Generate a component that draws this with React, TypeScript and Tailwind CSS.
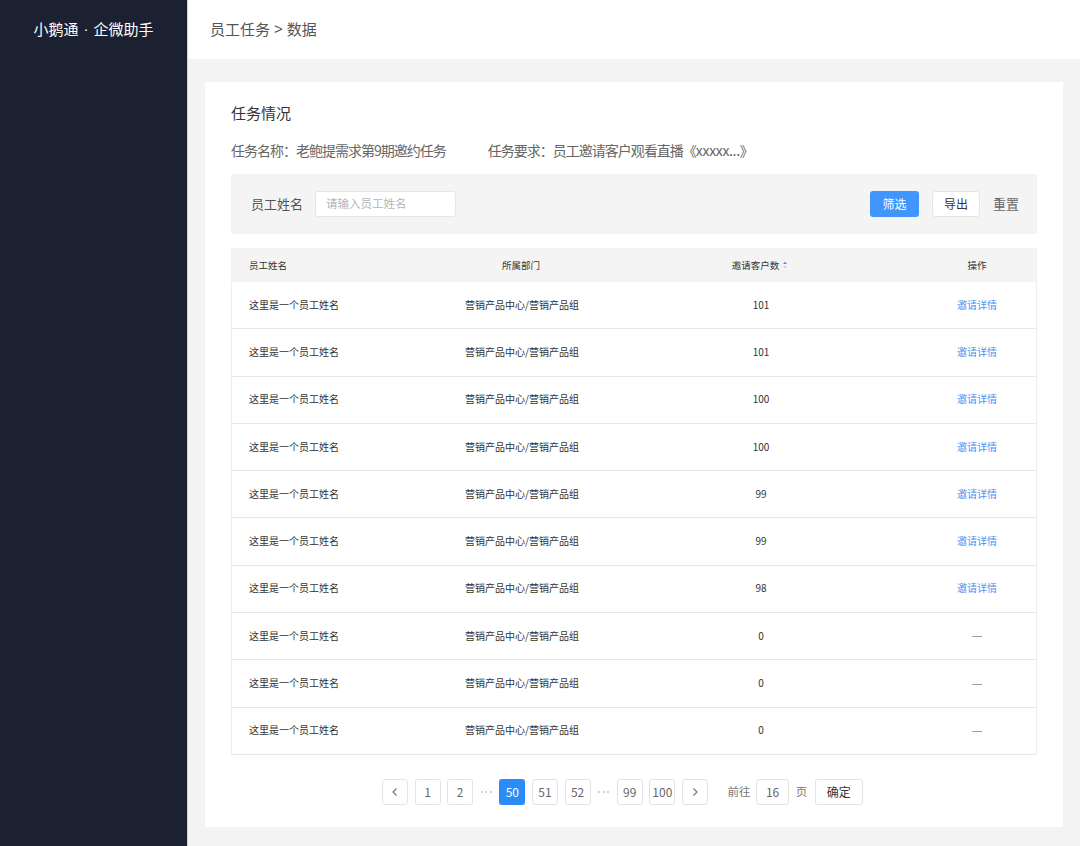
import React from "react";

const rows = [
  { count: "101", op: true },
  { count: "101", op: true },
  { count: "100", op: true },
  { count: "100", op: true },
  { count: "99", op: true },
  { count: "99", op: true },
  { count: "98", op: true },
  { count: "0", op: false },
  { count: "0", op: false },
  { count: "0", op: false },
];

const font = { fontFamily: '"Noto Sans CJK SC", "Noto Sans", sans-serif' };

function PageBtn({ children, active }: { children: React.ReactNode; active?: boolean }) {
  return (
    <div
      className={
        active
          ? "w-[26px] h-[26px] shrink-0 rounded-[3px] bg-[#2b8cf8] text-white flex items-center justify-center text-[12px]"
          : "w-[26px] h-[26px] shrink-0 rounded-[3px] border border-[#e4e4e4] bg-white text-[#666] flex items-center justify-center text-[12px]"
      }
    >
      {children}
    </div>
  );
}

function Dots() {
  return (
    <div className="w-[13px] shrink-0 flex items-center justify-between px-[1px]">
      <span className="block w-[2px] h-[2px] rounded-full bg-[#c4c4c4]" />
      <span className="block w-[2px] h-[2px] rounded-full bg-[#c4c4c4]" />
      <span className="block w-[2px] h-[2px] rounded-full bg-[#c4c4c4]" />
    </div>
  );
}

export default function App() {
  return (
    <div className="flex w-[1080px] h-[846px] overflow-hidden" style={font}>
      <aside className="w-[188px] shrink-0 bg-[#1c2132] border-r border-[#cfd1d6]">
        <div className="h-[59px] flex items-center justify-center text-white text-[15px]">
          <span>小鹅通</span>
          <span className="mx-[5px]" style={{ fontFamily: '"Liberation Sans", sans-serif' }}>·</span>
          <span>企微助手</span>
        </div>
      </aside>
      <main className="flex-1 flex flex-col bg-[#f3f3f3]">
        <header className="h-[59px] bg-white flex items-center pl-[22px] text-[15px] text-[#555]">
          <span>员工任务</span>
          <span className="mx-[4px]" style={{ fontFamily: '"Liberation Sans", sans-serif' }}>&gt;</span>
          <span>数据</span>
        </header>
        <div className="flex-1 pt-[23px] pl-[17px] pr-[17px] pb-[19px]">
          <div className="bg-white h-full px-[26px] pt-[20px]">
            <div className="text-[15px] leading-[22px] text-[#333]">任务情况</div>
            <div className="mt-[16px] flex text-[14px] leading-[20px] text-[#666]">
              <span className="tracking-[-1px]">任务名称：老鲍提需求第9期邀约任务</span>
              <span className="ml-[42px]">
                <span className="tracking-[-1px]">任务要求：员工邀请客户观看直播《</span>
                <span className="tracking-[-0.3px]">xxxxx...</span>
                <span>》</span>
              </span>
            </div>
            <div className="mt-[14px] h-[60px] bg-[#f4f4f4] flex items-center pl-[20px] pr-[18px]">
              <span className="text-[13px] text-[#555]">员工姓名</span>
              <div className="ml-[12px] w-[141px] h-[26px] bg-white border border-[#e6e6e6] rounded-[3px] flex items-center pl-[10px] text-[11.5px] text-[#b5b5b5]">
                请输入员工姓名
              </div>
              <div className="flex-1" />
              <div className="w-[49px] h-[26px] rounded-[3px] bg-[#4096fc] text-white text-[12px] flex items-center justify-center">筛选</div>
              <div className="ml-[13px] w-[48px] h-[26px] rounded-[3px] bg-white border border-[#e4e4e4] text-[#333] text-[12px] flex items-center justify-center">导出</div>
              <div className="ml-[13px] text-[13px] text-[#666]">重置</div>
            </div>
            <div className="mt-[14px]">
              <div className="grid grid-cols-[190px_200px_278px_138px] h-[34px] items-center bg-[#f4f4f4] text-[9.5px] text-[#333]">
                <div className="pl-[18px]">员工姓名</div>
                <div className="text-center">所属部门</div>
                <div className="flex items-center justify-center">
                  <span>邀请客户数</span>
                  <svg width="6" height="10" viewBox="0 0 6 10" className="ml-[3px]">
                    <path d="M3 1.5 L5 4 L1 4 Z" fill="#4096fc" />
                    <path d="M3 8.5 L5 6 L1 6 Z" fill="#d0d0d0" />
                  </svg>
                </div>
                <div className="text-center pl-[18px]">操作</div>
              </div>
              <div className="border-x border-[#eeeeee]">
                {rows.map((r, i) => (
                  <div
                    key={i}
                    className="grid grid-cols-[190px_200px_278px_136px] h-[47.3px] items-center border-b border-[#e8e8e8] text-[10px] text-[#333]"
                  >
                    <div className="pl-[17px] -mt-[2px]">这里是一个员工姓名</div>
                    <div className="text-center -mt-[2px]">营销产品中心/营销产品组</div>
                    <div className="text-center -mt-[2px]">{r.count}</div>
                    <div className="text-center pl-[18px] -mt-[2px]">
                      {r.op ? (
                        <span className="text-[#4a94f2]">邀请详情</span>
                      ) : (
                        <span className="text-[#888]" style={{ fontFamily: '"Liberation Sans", sans-serif' }}>—</span>
                      )}
                    </div>
                  </div>
                ))}
              </div>
            </div>
            <div className="mt-[24px] flex items-center pl-[151px] gap-[6.6px]">
              <PageBtn>
                <svg width="10" height="10" viewBox="0 0 10 10" fill="none" stroke="#777" strokeWidth="1.2">
                  <path d="M6.5 1.5 L3 5 L6.5 8.5" />
                </svg>
              </PageBtn>
              <PageBtn>1</PageBtn>
              <PageBtn>2</PageBtn>
              <Dots />
              <PageBtn active>50</PageBtn>
              <PageBtn>51</PageBtn>
              <PageBtn>52</PageBtn>
              <Dots />
              <PageBtn>99</PageBtn>
              <PageBtn>100</PageBtn>
              <PageBtn>
                <svg width="10" height="10" viewBox="0 0 10 10" fill="none" stroke="#777" strokeWidth="1.2">
                  <path d="M3.5 1.5 L7 5 L3.5 8.5" />
                </svg>
              </PageBtn>
              <span className="ml-[13px] text-[11.5px] text-[#777]">前往</span>
              <div className="-ml-[1px] w-[33px] h-[26px] rounded-[3px] border border-[#e4e4e4] bg-white text-[#666] text-[12px] flex items-center justify-center">16</div>
              <span className="text-[11.5px] text-[#777]">页</span>
              <div className="ml-[1px] w-[48px] h-[26px] rounded-[3px] border border-[#e4e4e4] bg-white text-[#333] text-[12px] flex items-center justify-center">确定</div>
            </div>
          </div>
        </div>
      </main>
    </div>
  );
}
